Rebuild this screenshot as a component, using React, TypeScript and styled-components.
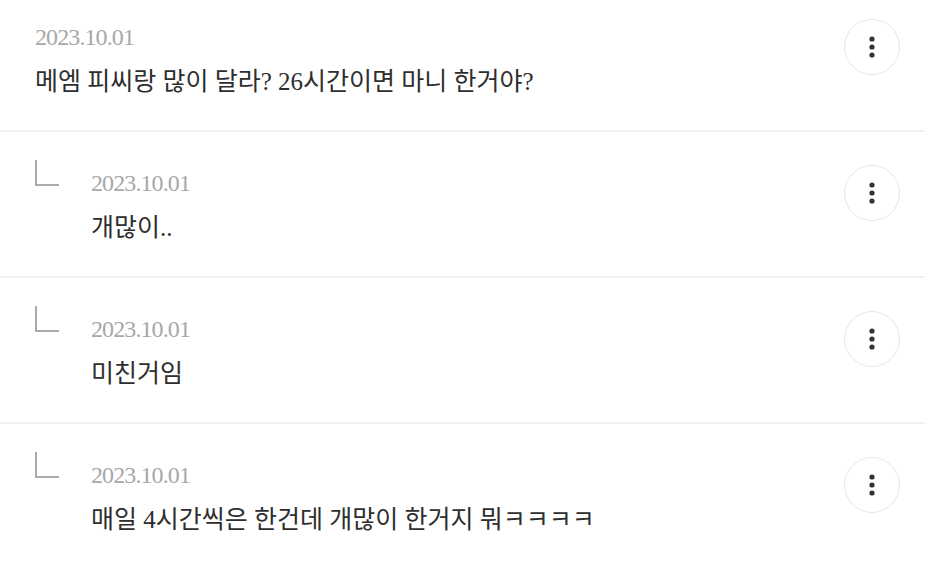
import React from "react";
import styled, { createGlobalStyle } from "styled-components";

const GlobalStyle = createGlobalStyle`
  html, body {
    margin: 0;
    padding: 0;
    background: #ffffff;
  }
  body {
    font-family: "Liberation Serif", "Noto Sans CJK KR", serif;
    color: #222222;
  }
`;

const List = styled.ul`
  list-style: none;
  margin: 0;
  padding: 0;
`;

const Item = styled.li<{ $reply?: boolean }>`
  display: flex;
  align-items: flex-start;
  padding: ${(p) => (p.$reply ? "39px" : "25px")} 25px 33px 35px;
  border-bottom: 2px solid #f0f0f0;
`;

const ReplyMark = styled.span`
  flex: none;
  width: 22px;
  height: 24px;
  margin-top: -11px;
  margin-right: 32px;
  border-left: 2px solid #aaaaaa;
  border-bottom: 2px solid #aaaaaa;
`;

const Content = styled.div`
  flex: 1;
  display: flex;
  flex-direction: column;
  gap: 18px;
`;

const DateText = styled.span`
  font-size: 24px;
  line-height: 24px;
  color: #a8a8a8;
  letter-spacing: -0.9px;
`;

const Message = styled.p`
  margin: 0;
  font-size: 25px;
  line-height: 30px;
  font-weight: 400;
  color: #2e2e2e;
  font-family: "Liberation Serif", "Noto Sans CJK KR", serif;
`;

const MenuButton = styled.button`
  flex: none;
  width: 56px;
  height: 56px;
  margin-top: -6px;
  border-radius: 50%;
  border: 1px solid #e6e6e6;
  background: #ffffff;
  display: flex;
  align-items: center;
  justify-content: center;
  padding: 0;
  cursor: pointer;
`;

const comments = [
  { reply: false, date: "2023.10.01", text: "메엠 피씨랑 많이 달라? 26시간이면 마니 한거야?" },
  { reply: true, date: "2023.10.01", text: "개많이.." },
  { reply: true, date: "2023.10.01", text: "미친거임" },
  { reply: true, date: "2023.10.01", text: "매일 4시간씩은 한건데 개많이 한거지 뭐ㅋㅋㅋㅋ" },
];

const Dots = () => (
  <svg width="6" height="22" viewBox="0 0 6 22" aria-hidden="true">
    <circle cx="3" cy="3" r="2.6" fill="#333" />
    <circle cx="3" cy="11" r="2.6" fill="#333" />
    <circle cx="3" cy="19" r="2.6" fill="#333" />
  </svg>
);

export default function App() {
  return (
    <>
      <GlobalStyle />
      <List>
        {comments.map((c, i) => (
          <Item key={i} $reply={c.reply}>
            {c.reply && <ReplyMark />}
            <Content>
              <DateText>{c.date}</DateText>
              <Message>{c.text}</Message>
            </Content>
            <MenuButton aria-label="더보기">
              <Dots />
            </MenuButton>
          </Item>
        ))}
      </List>
    </>
  );
}
